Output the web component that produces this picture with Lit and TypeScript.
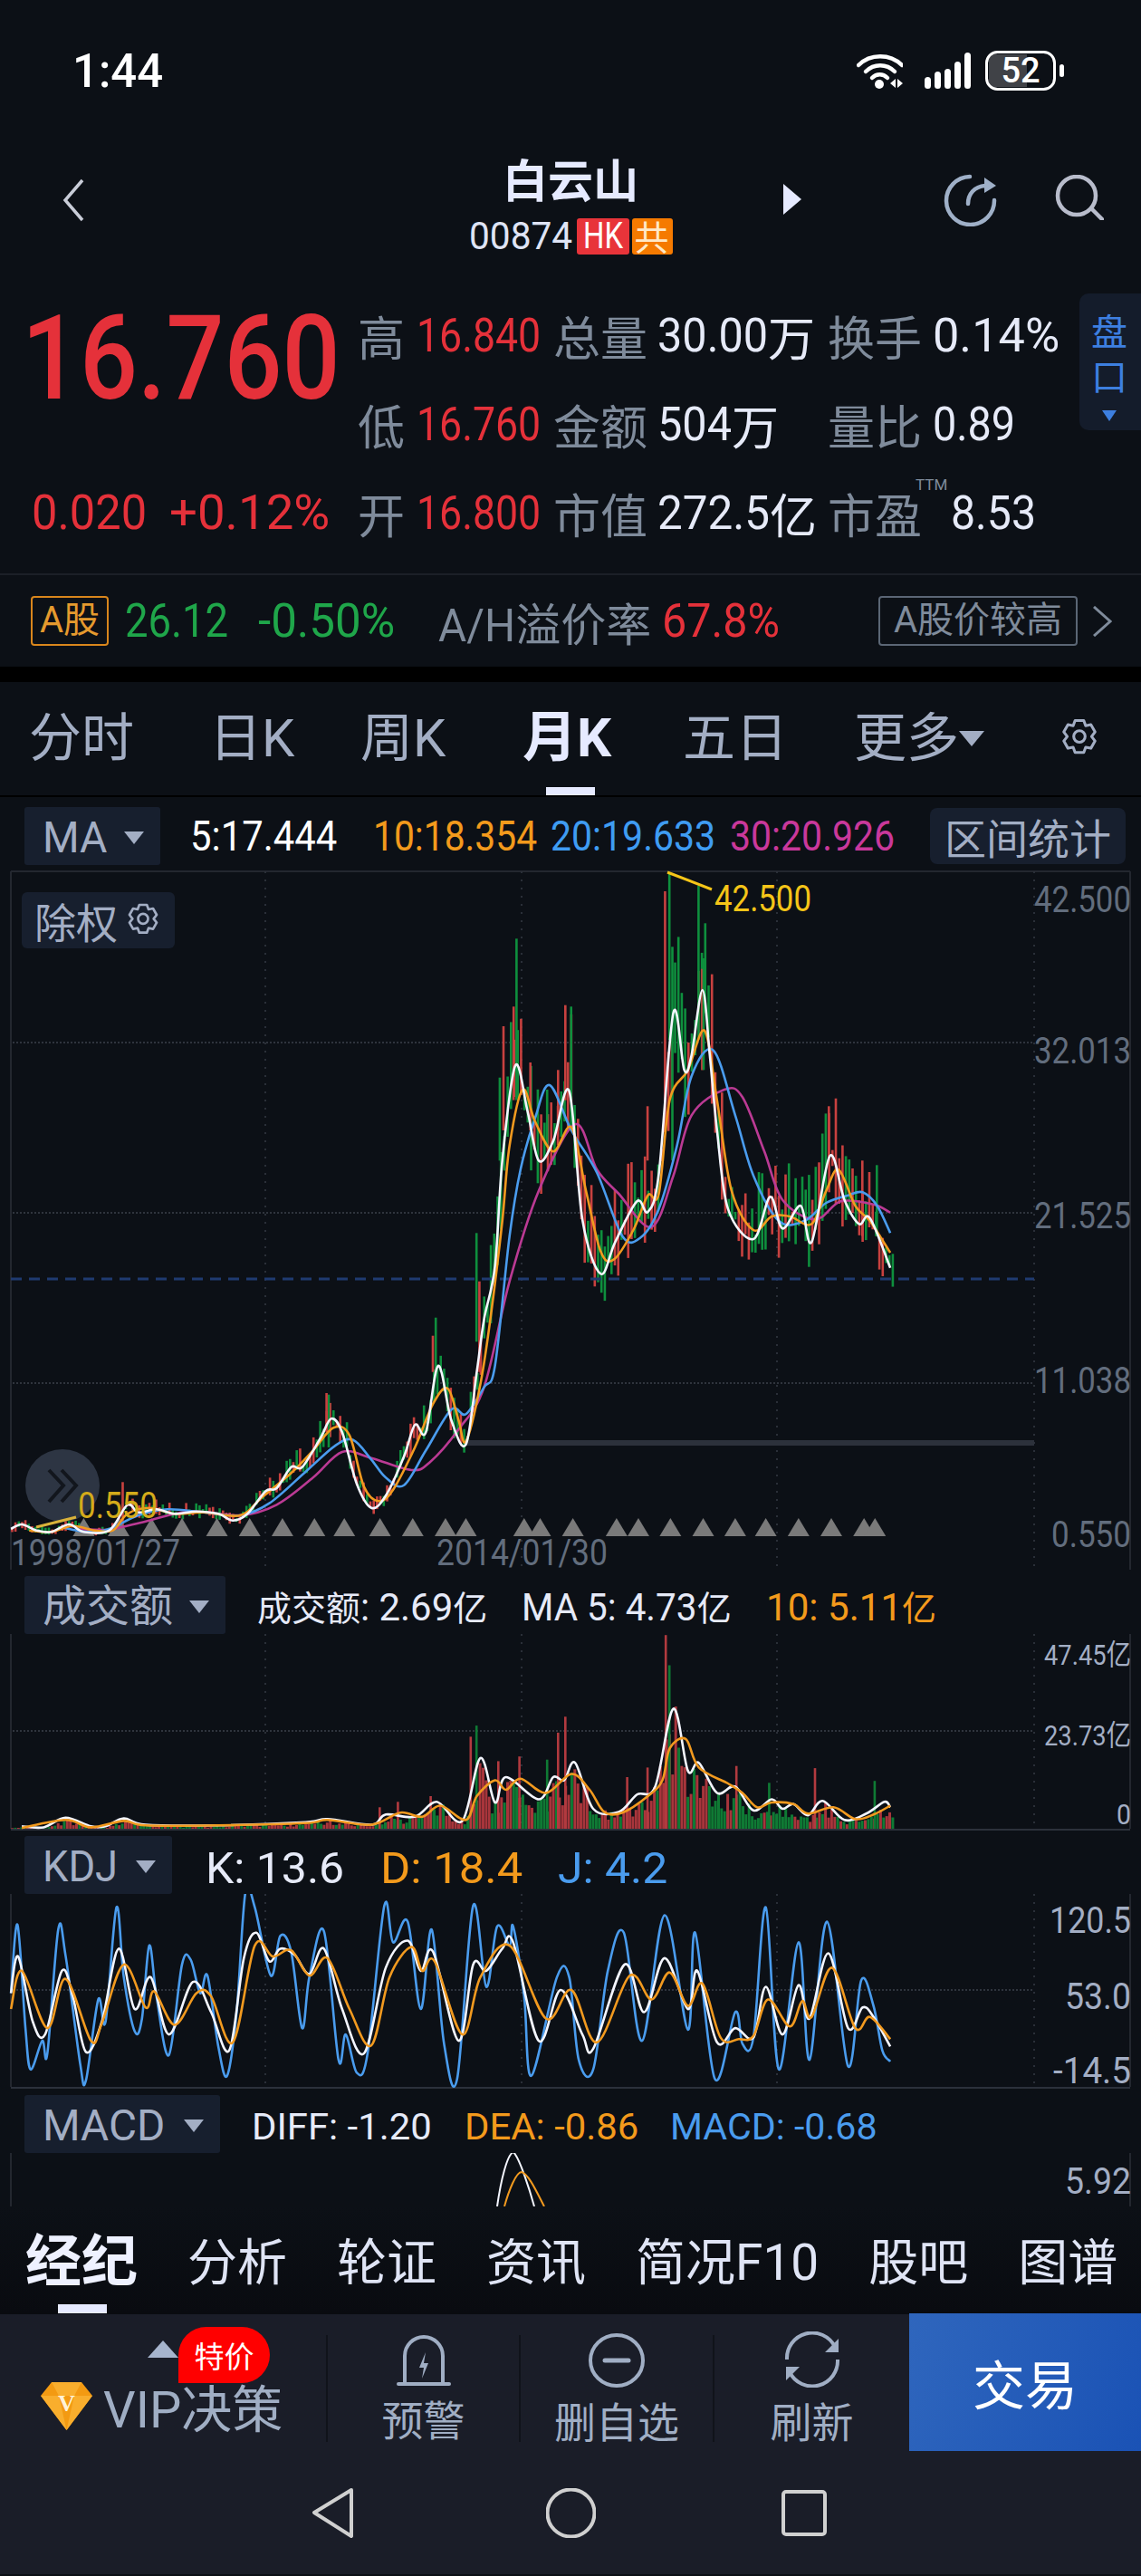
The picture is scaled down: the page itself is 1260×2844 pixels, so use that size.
import { LitElement, html, css, svg } from 'lit';
import { customElement } from 'lit/decorators.js';

type Pt = [number, number];
// [x, top, bottom, colour]
type Spike = [number, number, number, string];

const RED = '#c8413f';
const GREEN = '#0e8f3d';

// traces were read off zoomed crops, so they are kept in crop units and scaled here
const mainPt = (p: Pt[]): Pt[] => p.map(([x, y]) => [x / 1.244, 1250 + y / 3]);
const lowPt = (p: Pt[]): Pt[] => p.map(([x, y]) => [x / 1.244, 1750 + y / 2.851]);

const MA5: Pt[] = [[15,1320],[30,1305],[50,1325],[70,1330],[95,1305],[115,1330],[150,1325],[175,1240],[190,1265],[215,1255],[240,1270],[270,1262],[300,1270],[320,1292],[340,1270],[365,1195],[380,1185],[400,1115],[415,1115],[440,1020],[455,955],[470,1000],[490,1170],[510,1250],[530,1210],[555,1080],[570,975],[585,1000],[602,780],[620,960],[640,1040],[655,800],[665,625],[680,450],[690,100],[708,-215],[725,-60],[740,100],[760,35],[782,-130],[800,295],[825,475],[845,370],[875,235],[890,270],[905,145],[925,-390],[940,-200],[950,-250],[965,-465],[975,-250],[985,0],[1000,260],[1035,360],[1058,220],[1075,325],[1100,250],[1115,370],[1140,85],[1160,230],[1180,310],[1195,290],[1223,455]];
const MA10: Pt[] = [[40,1325],[70,1330],[100,1310],[130,1325],[155,1325],[175,1270],[205,1250],[240,1270],[280,1265],[330,1275],[360,1215],[400,1135],[430,1060],[458,985],[480,1010],[500,1180],[520,1228],[540,1190],[570,1050],[595,905],[615,855],[630,960],[640,1030],[660,840],[675,600],[690,300],[700,50],[718,-135],[735,-30],[760,70],[785,-10],[805,200],[825,400],[843,428],[870,330],[890,215],[905,210],[920,-100],[945,-200],[968,-330],[985,-100],[1005,200],[1035,330],[1060,285],[1085,285],[1115,310],[1135,200],[1152,130],[1175,250],[1195,300],[1223,405]];
const MA20: Pt[] = [[85,1315],[120,1330],[150,1320],[190,1275],[230,1255],[280,1265],[330,1275],[370,1235],[420,1130],[460,1045],[485,1025],[510,1090],[530,1150],[555,1175],[585,1060],[620,925],[640,940],[665,850],[680,780],[700,350],[715,130],[735,-40],[755,-150],[785,0],[820,140],[855,350],[880,355],[905,260],[930,50],[950,-180],[980,-265],[1010,-50],[1035,150],[1070,300],[1105,300],[1135,240],[1165,215],[1185,205],[1205,250],[1223,340]];
const MA30: Pt[] = [[110,1320],[150,1322],[200,1295],[260,1262],[330,1275],[380,1240],[430,1150],[470,1065],[510,1085],[565,1125],[590,1100],[630,990],[665,850],[700,500],[740,200],[790,-20],[820,130],[850,210],[895,320],[925,150],[950,-50],[995,-135],[1020,-110],[1050,70],[1075,230],[1120,295],[1155,235],[1200,245],[1223,272]];

const SPIKES: Spike[] = [
  [685,-175,100,GREEN],[690,-345,0,RED],[704,-410,-100,RED],[708,-635,-100,GREEN],[727,-225,0,RED],[750,-135,50,GREEN],
  [765,-200,0,RED],[775,-415,-100,RED],[783,-410,0,GREEN],[888,-80,100,RED],[912,-792,0,RED],[918,-855,-300,GREEN],
  [922,-608,100,GREEN],[958,-810,-300,GREEN],[963,-535,-200,RED],[965,-570,-200,GREEN],[1137,-80,100,RED],
  [653,340,700,GREEN],[657,500,800,RED],[597,620,800,GREEN],[593,680,800,RED],[813,550,300,GREEN],[630,1150,1000,RED],
  [500,1280,1150,GREEN],[167,1165,1320,RED],[450,875,1050,GREEN],[447,870,1000,RED],[1110,500,300,RED],
  [1198,495,300,RED],[1223,540,400,GREEN],[1203,115,350,GREEN],[1183,100,350,RED],[996,440,200,GREEN],[793,450,100,GREEN],
];

const ARROWS = [115,163,208,250,298,343,388,432,473,522,567,612,640,720,742,787,847,877,921,966,1010,1052,1097,1142,1187,1202];

const VOL_WHITE: Pt[] = [[30,765],[60,768],[90,738],[125,765],[145,765],[170,740],[200,760],[300,762],[420,752],[450,742],[510,760],[530,728],[570,735],[600,688],[635,748],[660,550],[680,690],[695,610],[740,680],[760,610],[775,620],[790,565],[815,710],[850,720],[875,665],[900,640],[925,395],[945,590],[960,565],[985,660],[1010,640],[1035,715],[1060,680],[1075,710],[1090,695],[1110,730],[1130,685],[1160,745],[1190,725],[1215,688],[1223,705]];
const VOL_ORANGE: Pt[] = [[30,770],[90,745],[125,768],[170,748],[200,762],[300,762],[420,755],[450,745],[510,760],[550,722],[580,735],[605,700],[640,745],[655,670],[680,620],[695,650],[715,615],[750,660],[785,600],[810,650],[830,720],[855,722],[890,670],[910,620],[920,520],[942,490],[960,580],[1000,630],[1020,660],[1040,705],[1060,690],[1090,695],[1110,725],[1145,705],[1175,742],[1200,728],[1223,700]];
const VOL_SPIKES: [number, number, string][] = [[913,163,'#b23a3f'],[918,258,'#0f7a34'],[775,420,'#b23a3f'],[765,470,'#b23a3f'],[653,448,'#0f7a34'],[645,483,'#b23a3f'],[545,688,'#b23a3f'],[520,705,'#b23a3f'],[590,670,'#b23a3f'],[1118,582,'#b23a3f'],[1010,575,'#b23a3f'],[1055,628,'#0f7a34'],[1200,622,'#0f7a34'],[888,580,'#b23a3f'],[860,610,'#b23a3f'],[712,545,'#b23a3f'],[683,560,'#b23a3f'],[750,555,'#0f7a34']];

const KDJ_J: Pt[] = [[15,1290],[24,1075],[35,1400],[42,1530],[58,1440],[65,1480],[80,1090],[90,1170],[110,1510],[118,1565],[135,1310],[145,1380],[160,1020],[170,1240],[185,1410],[195,1370],[205,1140],[215,1300],[232,1485],[250,1200],[262,1185],[275,1290],[285,1235],[300,1460],[312,1550],[325,1350],[337,975],[350,1020],[372,1235],[385,1110],[400,1160],[415,1400],[425,1240],[445,1095],[465,1500],[475,1420],[490,1540],[505,1480],[528,1015],[540,1130],[560,1065],[578,1340],[593,1090],[610,1450],[628,1560],[650,1015],[668,1270],[683,1080],[700,1140],[705,1080],[720,1300],[730,1550],[765,1240],[782,1240],[795,1500],[815,1530],[835,1220],[857,1100],[882,1440],[913,1045],[945,1405],[955,1100],[982,1560],[1010,1350],[1020,1450],[1035,1430],[1052,1020],[1070,1530],[1097,1130],[1112,1500],[1136,1065],[1165,1520],[1183,1250],[1200,1330],[1212,1470],[1223,1505]];
const KDJ_K: Pt[] = [[15,1290],[25,1175],[45,1380],[62,1420],[85,1220],[100,1300],[118,1475],[140,1380],[163,1150],[185,1340],[207,1240],[232,1420],[265,1255],[290,1350],[315,1470],[335,1180],[352,1100],[370,1190],[385,1150],[405,1170],[425,1230],[445,1150],[470,1340],[500,1480],[530,1210],[560,1125],[578,1220],[595,1160],[630,1440],[650,1200],[668,1220],[690,1150],[705,1130],[740,1440],[770,1280],[800,1420],[815,1465],[858,1200],[885,1350],[913,1180],[945,1340],[958,1220],[985,1445],[1010,1400],[1035,1430],[1052,1270],[1075,1420],[1097,1265],[1112,1370],[1138,1165],[1165,1400],[1185,1335],[1200,1365],[1223,1458]];
const KDJ_D: Pt[] = [[15,1340],[30,1220],[65,1400],[90,1245],[125,1440],[140,1385],[170,1200],[200,1335],[212,1285],[240,1390],[270,1290],[290,1300],[320,1445],[350,1140],[375,1175],[400,1155],[425,1235],[450,1180],[480,1340],[510,1455],[535,1240],[565,1145],[580,1220],[597,1190],[635,1420],[660,1240],[700,1140],[750,1370],[785,1280],[820,1445],[865,1235],[895,1310],[920,1225],[945,1330],[965,1260],[990,1430],[1015,1435],[1035,1425],[1055,1310],[1085,1395],[1102,1315],[1115,1365],[1143,1210],[1175,1400],[1195,1365],[1223,1435]];

// Roboto advance widths, the app's numerals are a narrower face so they get squeezed to fit
const EM: Record<string, number> = {
  '.': 0.263, ':': 0.242, '-': 0.276, '+': 0.567, '%': 0.732, ' ': 0.247, '/': 0.412,
  K: 0.627, D: 0.654, J: 0.552, M: 0.873, A: 0.652, I: 0.272, F: 0.546, E: 0.568, C: 0.65, H: 0.713,
};

function n(text: string, px: number, target: number) {
  const natural = [...text].reduce((sum, ch) => sum + (EM[ch] ?? 0.5615), 0) * px;
  return html`<span class="n" style="transform:scaleX(${(target / natural).toFixed(3)});margin-right:${(target - natural).toFixed(1)}px">${text}</span>`;
}

const label = (text: string, x: number, y: number, len: number, cls: string) =>
  svg`<text class=${cls} x=${x} y=${y} textLength=${len} lengthAdjust="spacingAndGlyphs">${text}</text>`;

function curve(p: Pt[]): string {
  let d = `M${p[0][0].toFixed(1)} ${p[0][1].toFixed(1)}`;
  for (let i = 0; i < p.length - 1; i++) {
    const a = p[Math.max(i - 1, 0)];
    const b = p[i];
    const c = p[i + 1];
    const e = p[Math.min(i + 2, p.length - 1)];
    const c1x = b[0] + (c[0] - a[0]) / 6;
    const c1y = b[1] + (c[1] - a[1]) / 6;
    const c2x = c[0] - (e[0] - b[0]) / 6;
    const c2y = c[1] - (e[1] - b[1]) / 6;
    d += `C${c1x.toFixed(1)} ${c1y.toFixed(1)} ${c2x.toFixed(1)} ${c2y.toFixed(1)} ${c[0].toFixed(1)} ${c[1].toFixed(1)}`;
  }
  return d;
}

function at(trace: Pt[], x: number): number {
  if (x <= trace[0][0]) return trace[0][1];
  for (let i = 1; i < trace.length; i++) {
    if (x <= trace[i][0]) {
      const t = (x - trace[i - 1][0]) / (trace[i][0] - trace[i - 1][0]);
      return trace[i - 1][1] + t * (trace[i][1] - trace[i - 1][1]);
    }
  }
  return trace[trace.length - 1][1];
}

function seeded(seed: number) {
  let s = seed;
  return () => {
    s = (s * 16807) % 2147483647;
    return s / 2147483647;
  };
}

function candles() {
  const r = seeded(4711);
  const out = [];
  for (let x = 15; x <= 1225; x += 4.6) {
    const w = at(MA5, x);
    const amp = 20 + (1330 - w) * 0.17;
    const top = w - amp * r() * 1.1;
    const bottom = w + amp * r() * 0.7;
    const [p] = mainPt([[x, top]]);
    const [q] = mainPt([[x, bottom]]);
    out.push(svg`<rect x=${p[0].toFixed(1)} y=${p[1].toFixed(1)} width="2.6" height=${(q[1] - p[1]).toFixed(1)} fill=${r() > 0.5 ? RED : GREEN}></rect>`);
  }
  for (const [x, top, bottom, color] of SPIKES) {
    const [p] = mainPt([[x, top]]);
    const [q] = mainPt([[x, bottom]]);
    out.push(svg`<rect x=${p[0].toFixed(1)} y=${p[1].toFixed(1)} width="2.6" height=${(q[1] - p[1]).toFixed(1)} fill=${color}></rect>`);
  }
  return out;
}

function volumeBars() {
  const r = seeded(907);
  const out = [];
  const base = 2021;
  for (let x = 15; x <= 1225; x += 4.2) {
    const w = at(VOL_WHITE, x);
    const h = ((770 - w) * (0.4 + r() * 0.7)) / 2.851;
    const green = r() > (x > 930 ? 0.35 : 0.6);
    out.push(svg`<rect x=${(x / 1.244).toFixed(1)} y=${(base - h).toFixed(1)} width="3" height=${h.toFixed(1)} fill=${green ? '#0f7a34' : '#a8353b'}></rect>`);
  }
  for (const [x, top, color] of VOL_SPIKES) {
    const y = 1750 + top / 2.851;
    out.push(svg`<rect x=${(x / 1.244).toFixed(1)} y=${y.toFixed(1)} width="2.6" height=${(base - y).toFixed(1)} fill=${color}></rect>`);
  }
  return out;
}

const frame = (top: number, bottom: number) => svg`
  <line class="axis" x1="12" x2="12" y1=${top} y2=${bottom}></line>
  <line class="axis" x1="1248" x2="1248" y1=${top} y2=${bottom}></line>
  ${[293, 576, 858, 1142].map((x) => svg`<line class="vgrid" x1=${x} x2=${x} y1=${top} y2=${bottom}></line>`)}
`;

const hgrid = (y: number) => svg`<line class="hgrid" x1="14" x2="1142" y1=${y} y2=${y}></line>`;

const gear = (size: number) => html`<svg class="gear" width=${size} height=${size} viewBox="0 0 24 24">
  <path d="M9.500 1.800h5l1.100 3 3-.6 2.400 4.200-2 2.600 2 2.600-2.400 4.200-3-.6-1.100 3h-5l-1.100-3-3 .6L3 13.600l2-2.600-2-2.600 2.400-4.200 3 .6z"></path>
  <circle cx="12" cy="11" r="3.300"></circle>
</svg>`;

const picker = (text: unknown, width: number) => html`
  <div class="picker" style="width:${width}px"><span>${text}</span><i class="tri"></i></div>
`;

@customElement('app-root')
export class AppRoot extends LitElement {
  static styles = css`
    :host {
      display: block;
      width: 1260px;
      height: 2844px;
      overflow: hidden;
      background: #0c1016;
      color: #e6eaf8;
      font-family: Roboto, 'Noto Sans CJK SC', sans-serif;
    }
    svg {
      display: block;
      flex: none;
    }
    .n {
      display: inline-block;
      transform-origin: 0 50%;
      white-space: pre;
    }
    .status {
      height: 140px;
      box-sizing: border-box;
      padding: 54px 0 0 80px;
      display: flex;
      color: #fff;
    }
    .time {
      font: 500 52px/50px Roboto, sans-serif;
      flex: 1;
    }
    .status-icons {
      display: flex;
      gap: 24px;
      padding: 4px 84px 0 0;
      align-items: flex-start;
    }
    .status-icons svg + svg + svg {
      margin-left: -8px;
    }

    .header {
      height: 160px;
      box-sizing: border-box;
      padding-top: 28px;
      display: grid;
      grid-template-columns: 1fr 225px 1fr;
    }
    .back {
      margin: 29px 0 0 68px;
    }
    .name {
      text-align: center;
    }
    .name h1 {
      margin: 0;
      font: 700 50px/56px 'Noto Sans CJK SC', sans-serif;
      color: #e6eaff;
    }
    .code {
      margin-top: 17px;
      height: 40px;
      display: flex;
      font-size: 42px;
      line-height: 40px;
      color: #dfe4f5;
      white-space: nowrap;
    }
    .code b {
      box-sizing: border-box;
      width: 58px;
      margin-left: 5px;
      font-weight: 400;
      background: #e8343a;
      color: #fff;
      border-radius: 3px;
      padding-left: 7px;
      font-size: 40px;
      text-align: left;
    }
    .code b + b {
      width: 45px;
      margin-left: 3px;
      padding-left: 3px;
      background: #f57a00;
      font: 400 38px/38px 'Noto Sans CJK SC', sans-serif;
      color: #ffe9c8;
    }
    .head-actions {
      display: flex;
      align-items: flex-start;
    }
    .next {
      margin: 35px 0 0 122px;
    }
    .redo {
      margin: 24px 0 0 156px;
    }
    .find {
      margin: 25px 0 0 64px;
    }

    .quote {
      height: 333px;
      box-sizing: border-box;
      display: grid;
      grid-template-columns: 395px 65px 151px 115px 188px 116px 162px 68px;
      grid-template-rows: 98px 98px 98px;
      padding-top: 21px;
    }
    .price-col {
      grid-row: 1 / 4;
      padding-left: 24px;
      display: flex;
      flex-direction: column;
    }
    .price {
      font-size: 130px;
      line-height: 150px;
      font-weight: 500;
      color: #e5313a;
    }
    .change {
      margin-top: 65px;
      padding-left: 11px;
      display: flex;
      gap: 25px;
      font-size: 54px;
      line-height: 60px;
      color: #e5313a;
    }
    .cell {
      display: flex;
      align-items: center;
      white-space: nowrap;
      font-size: 52px;
    }
    .lab {
      color: #7f8b9b;
      font-family: 'Noto Sans CJK SC', sans-serif;
      font-size: 52px;
    }
    .red {
      color: #e5313a;
    }
    .ttm {
      position: relative;
    }
    .ttm small {
      position: absolute;
      left: 100%;
      top: -3px;
      font: 400 17px/18px Roboto, sans-serif;
      color: #7f8b9b;
      margin-left: -7px;
    }
    .side {
      grid-row: 1 / 3;
      grid-column: 8;
      height: 151px;
      margin-top: 3px;
      background: #141c2b;
      border-radius: 10px 0 0 10px;
      display: flex;
      flex-direction: column;
      align-items: center;
      padding: 15px 2px 0 0;
      box-sizing: border-box;
      color: #3d7fe0;
      font: 400 40px/50px 'Noto Sans CJK SC', sans-serif;
    }
    .side i {
      margin-top: 14px;
      border: 8px solid transparent;
      border-top: 12px solid #3d7fe0;
      border-bottom: 0;
    }

    .ah {
      height: 103px;
      box-sizing: border-box;
      border-top: 2px solid #1c2027;
      display: flex;
      align-items: center;
      padding-left: 34px;
      font-size: 52px;
      white-space: nowrap;
    }
    .badge {
      box-sizing: border-box;
      height: 55px;
      border-radius: 4px;
      border: 2px solid #d9861c;
      color: #e59a2e;
      font: 400 40px/50px Roboto, 'Noto Sans CJK SC', sans-serif;
      width: 86px;
      text-align: center;
      white-space: nowrap;
    }
    .green {
      color: #1fa64a;
    }
    .ah .up {
      margin-left: 18px;
    }
    .ah .pct {
      margin-left: 33px;
    }
    .ah .prem {
      margin-left: 48px;
      color: #7f8b9b;
      font-size: 50px;
    }
    .ah .rate {
      margin-left: 12px;
    }
    .ah .note {
      margin-left: auto;
      width: 220px;
      border-color: #5b6675;
      color: #7f8b9b;
    }
    .ah svg {
      margin: 0 32px 0 16px;
    }
    .gap {
      height: 17px;
      background: #000;
    }

    .periods {
      height: 127px;
      box-sizing: border-box;
      border-bottom: 2px solid #000;
      padding: 0 0 2px 32px;
      display: grid;
      grid-template-columns: 199px 167px 179px 177px 189px 226px auto;
      align-items: center;
      font-size: 58px;
      line-height: 1;
      color: #a3aec4;
    }
    .periods span {
      display: flex;
      align-items: center;
      white-space: nowrap;
    }
    .periods .on {
      position: relative;
      align-self: stretch;
      font-weight: 700;
      color: #e6eaff;
      font-size: 60px;
    }
    .on::after {
      content: '';
      position: absolute;
      left: 26px;
      bottom: -2px;
      width: 54px;
      height: 9px;
      background: #e6eaff;
    }
    .periods .more i {
      border: 14px solid transparent;
      border-top: 17px solid #a3aec4;
      border-bottom: 0;
      margin-top: 2px;
    }
    .gear {
      fill: none;
      stroke: #a3aec4;
      stroke-width: 1.600;
      stroke-linejoin: round;
    }

    .legend {
      display: flex;
      align-items: center;
      white-space: nowrap;
      padding-left: 27px;
      box-sizing: border-box;
    }
    .ma-row {
      height: 81px;
      padding-top: 5px;
      font-size: 46px;
    }
    .picker {
      height: 64px;
      box-sizing: border-box;
      background: #171f2e;
      border-radius: 3px;
      padding: 4px 0 0 20px;
      display: flex;
      align-items: center;
      flex: none;
      color: #a3aec4;
      font-size: 48px;
      line-height: 1;
    }
    .tri {
      margin-left: auto;
      margin-right: 18px;
      border: 11px solid transparent;
      border-top: 14px solid #a3aec4;
      border-bottom: 0;
    }
    .ma-row .v5 {
      margin-left: 33px;
      color: #fff;
    }
    .ma-row .v10 {
      margin-left: 40px;
      color: #f39a1c;
    }
    .ma-row .v20 {
      margin-left: 15px;
      color: #3f9cf2;
    }
    .ma-row .v30 {
      margin-left: 15px;
      color: #c9389b;
    }
    .range {
      margin-left: auto;
      margin-right: 17px;
      height: 62px;
      width: 216px;
      background: #171f2e;
      border-radius: 8px;
      color: #a3aec4;
      text-align: center;
      font: 400 46px/62px 'Noto Sans CJK SC', sans-serif;
    }

    .pane-wrap {
      position: relative;
    }
    .axis {
      stroke: #23272f;
      stroke-width: 2;
    }
    .vgrid {
      stroke: #2a2f38;
      stroke-width: 2;
      stroke-dasharray: 2 7;
    }
    .hgrid {
      stroke: #2f343d;
      stroke-width: 2;
      stroke-dasharray: 2 2;
    }
    .ln {
      fill: none;
      stroke-width: 2.600;
      stroke-linejoin: round;
    }
    .white {
      stroke: #f4f6ff;
    }
    .orange {
      stroke: #f29a1f;
    }
    .blue {
      stroke: #4a9cee;
    }
    .pink {
      stroke: #bb3a94;
    }
    text {
      font-family: Roboto, 'Noto Sans CJK SC', sans-serif;
    }
    .scale {
      fill: #626d7d;
      font-size: 40px;
      text-anchor: end;
    }
    .scale.light {
      fill: #a3aec4;
    }
    .scale.small {
      font-size: 32px;
    }
    .date {
      fill: #626d7d;
      font-size: 40px;
    }
    .peak {
      fill: #f5c518;
      font-size: 40px;
    }
    .peak.dim {
      fill: #d4ab1a;
    }
    .adjust {
      position: absolute;
      left: 24px;
      top: 24px;
      width: 169px;
      height: 62px;
      background: #171f2e;
      border-radius: 6px;
      display: flex;
      align-items: center;
      gap: 8px;
      padding-left: 14px;
      box-sizing: border-box;
      color: #a3aec4;
      font: 400 46px/1 'Noto Sans CJK SC', sans-serif;
    }
    .vol-row,
    .macd-row,
    .kdj-row {
      align-items: flex-end;
    }
    .vol-row > span,
    .macd-row > span,
    .kdj-row > span {
      line-height: 56px;
    }
    .vol-row {
      height: 71px;
      font-size: 42px;
      color: #e6eaf8;
    }
    .cjk {
      font-size: 38px;
    }
    .vol-row > :nth-child(2) {
      margin-left: 35px;
    }
    .vol-row > :nth-child(3) {
      margin-left: 38px;
    }
    .vol-row > :nth-child(4) {
      margin-left: 38px;
      color: #f39a1c;
    }
    .kdj-row {
      height: 70px;
      font-size: 48px;
    }
    .kdj-row > :nth-child(2) {
      margin-left: 37px;
    }
    .kdj-row > :nth-child(3) {
      margin-left: 40px;
      color: #f39a1c;
    }
    .kdj-row > :nth-child(4) {
      margin-left: 38px;
      color: #4a9cee;
    }
    .macd-row {
      height: 71px;
      font-size: 40px;
    }
    .macd-row > :nth-child(2) {
      margin-left: 35px;
    }
    .macd-row > :nth-child(3) {
      margin-left: 36px;
      color: #f39a1c;
    }
    .macd-row > :nth-child(4) {
      margin-left: 35px;
      color: #4a9cee;
    }

    .sections {
      height: 119px;
      box-sizing: border-box;
      padding: 5px 0 0 28px;
      display: flex;
      gap: 55px;
      align-items: center;
      font-size: 55px;
      line-height: 1;
      color: #dfe4f5;
      white-space: nowrap;
      background: linear-gradient(#0c1016, #090b10);
    }
    .sections .on {
      position: relative;
      align-self: stretch;
      display: flex;
      align-items: center;
      font-weight: 700;
      font-size: 62px;
      color: #eef1ff;
    }
    .sections .on::after {
      left: 36px;
      bottom: 1px;
      height: 10px;
    }

    .dock {
      height: 287px;
      background: #1a1d28;
    }
    .tools {
      height: 151px;
      display: grid;
      grid-template-columns: 362px 213px 214px 215px 256px;
    }
    .tool {
      margin: 23px 0 10px;
      height: 118px;
      border-right: 2px solid #10131a;
      display: flex;
      flex-direction: column;
      align-items: center;
      color: #a0aec4;
      font: 400 46px/46px 'Noto Sans CJK SC', sans-serif;
      white-space: nowrap;
    }
    .tool span {
      margin-top: 10px;
    }
    .tool svg {
      fill: none;
      stroke: #a0aec4;
      stroke-width: 4;
    }
    .vip {
      position: relative;
      flex-direction: row;
      align-items: flex-start;
      padding: 55px 0 0 45px;
      box-sizing: border-box;
      gap: 12px;
      font: 400 56px/56px Roboto, 'Noto Sans CJK SC', sans-serif;
    }
    .vip span {
      margin-top: 0;
    }
    .vip .tip {
      position: absolute;
      left: 197px;
      top: -9px;
      width: 101px;
      height: 62px;
      box-sizing: border-box;
      background: #f00;
      border-radius: 31px 31px 31px 0;
      color: #fff;
      font: 400 33px/62px 'Noto Sans CJK SC', sans-serif;
      text-align: center;
    }
    .vip i {
      position: absolute;
      left: 163px;
      top: 6px;
      border: 17px solid transparent;
      border-bottom: 19px solid #a6b4cd;
      border-top: 0;
    }
    .trade {
      height: 152px;
      margin-top: -1px;
      background: linear-gradient(110deg, #2f66bd, #1a52b5);
      color: #fff;
      font: 400 58px/152px 'Noto Sans CJK SC', sans-serif;
      text-align: center;
    }
    .nav {
      padding: 41px 0 0 344px;
      display: flex;
      gap: 212px;
      align-items: flex-start;
    }
    .nav svg {
      fill: none;
      stroke: #d0d0d0;
      stroke-width: 4;
      stroke-linejoin: round;
    }
    .nav svg:last-child {
      margin: 2px 0 0 -7px;
    }
  `;

  private renderStatus() {
    return html`<div class="status">
      <div class="time">${n('1:44', 52, 98)}</div>
      <div class="status-icons">
        <svg width="51" height="40" viewBox="0 0 51 40" fill="none" stroke="#fff" stroke-width="4.500" stroke-linecap="round">
          <path d="M2 14C15 1 37 1 50 14"></path>
          <path d="M10 21C19 12 33 12 42 21"></path>
          <path d="M17 28C22 23 29 23 34 28"></path>
          <circle cx="25" cy="35" r="5" fill="#fff" stroke="none"></circle>
          <path d="M43 29v10l-6-5zM45 29v10l6-5z" fill="#fff" stroke="none"></path>
        </svg>
        <svg width="51" height="40" viewBox="0 0 51 40" fill="#fff">
          <rect x="0" y="27" width="7" height="13" rx="3.500"></rect>
          <rect x="11" y="21" width="7" height="19" rx="3.500"></rect>
          <rect x="22" y="18" width="7" height="22" rx="3.500"></rect>
          <rect x="33" y="10" width="7" height="30" rx="3.500"></rect>
          <rect x="44" y="0" width="7" height="40" rx="3.500"></rect>
        </svg>
        <svg width="88" height="44" viewBox="0 0 88 44" style="margin-top:-2px">
          <rect x="4" y="4" width="42" height="36" fill="#404247"></rect>
          <rect x="1.500" y="1.500" width="75" height="41" rx="12" fill="none" stroke="#fff" stroke-width="3"></rect>
          <rect x="82" y="15" width="5" height="14" rx="2.500" fill="#fff"></rect>
          <text x="39" y="35" text-anchor="middle" fill="#fff" style="font:500 38px Roboto,sans-serif">52</text>
        </svg>
      </div>
    </div>`;
  }

  private renderHeader() {
    return html`<div class="header">
      <svg class="back" width="26" height="48" viewBox="0 0 26 48" fill="none" stroke="#c9cdd8" stroke-width="3.500">
        <path d="M23 2L4 24l19 22"></path>
      </svg>
      <div class="name">
        <h1>白云山</h1>
        <div class="code">${n('00874', 42, 114)}<b>${n('HK', 40, 44)}</b><b>共</b></div>
      </div>
      <div class="head-actions">
        <svg class="next" width="20" height="34" viewBox="0 0 20 34" fill="#e6eaff"><path d="M0 0l20 17L0 34z"></path></svg>
        <svg class="redo" width="60" height="58" viewBox="0 0 60 58" fill="none" stroke="#9fb0c8" stroke-width="4.500" stroke-linecap="round">
          <path d="M30 3A26.500 26.500 0 1 0 57 29"></path>
          <path d="M28 33C28 22 35 14 47 13"></path>
          <path d="M46 4l13 9-13 8z" fill="#9fb0c8" stroke="none"></path>
        </svg>
        <svg class="find" width="54" height="50" viewBox="0 0 54 50" fill="none" stroke="#b8bccb" stroke-width="4.500" stroke-linecap="round">
          <circle cx="24" cy="23" r="21"></circle>
          <path d="M41 38L52 49"></path>
        </svg>
      </div>
    </div>`;
  }

  private renderQuote() {
    return html`<div class="quote">
      <div class="price-col">
        <div class="price">${n('16.760', 130, 346)}</div>
        <div class="change"><span>${n('0.020', 54, 127)}</span><span>${n('+0.12%', 54, 177)}</span></div>
      </div>
      <div class="cell lab">高</div><div class="cell red">${n('16.840', 52, 137)}</div>
      <div class="cell lab">总量</div><div class="cell">${n('30.00', 52, 122)}万</div>
      <div class="cell lab">换手</div><div class="cell">${n('0.14%', 52, 140)}</div>
      <div class="side">盘<br />口<i></i></div>
      <div class="cell lab">低</div><div class="cell red">${n('16.760', 52, 137)}</div>
      <div class="cell lab">金额</div><div class="cell">${n('504', 52, 82)}万</div>
      <div class="cell lab">量比</div><div class="cell">${n('0.89', 52, 91)}</div>
      <div class="cell lab">开</div><div class="cell red">${n('16.800', 52, 137)}</div>
      <div class="cell lab">市值</div><div class="cell">${n('272.5', 52, 124)}亿</div>
      <div class="cell lab"><span class="ttm">市盈<small>TTM</small></span></div><div class="cell" style="padding-left:20px">${n('8.53', 52, 94)}</div>
    </div>
    <div class="ah">
      <div class="badge">A股</div>
      <span class="green up">${n('26.12', 52, 114)}</span>
      <span class="green pct">${n('-0.50%', 52, 151)}</span>
      <span class="prem">${n('A/H', 50, 85)}溢价率</span>
      <span class="red rate">${n('67.8%', 52, 130)}</span>
      <div class="badge note">A股价较高</div>
      <svg width="22" height="34" viewBox="0 0 22 34" fill="none" stroke="#7f8b9b" stroke-width="3"><path d="M2 1l18 16L2 33"></path></svg>
    </div>
    <div class="gap"></div>`;
  }

  private renderPeriods() {
    return html`<div class="periods">
      <span>分时</span><span>日K</span><span>周K</span>
      <span class="on">月K</span>
      <span>五日</span>
      <span class="more">更多<i></i></span>
      ${gear(46)}
    </div>
    <div class="legend ma-row">
      ${picker(n('MA', 48, 71), 150)}
      <span class="v5">${n('5:17.444', 46, 162)}</span>
      <span class="v10">${n('10:18.354', 46, 181)}</span>
      <span class="v20">${n('20:19.633', 46, 182)}</span>
      <span class="v30">${n('30:20.926', 46, 182)}</span>
      <div class="range">区间统计</div>
    </div>`;
  }

  private renderMain() {
    const line = (p: Pt[], cls: string) => svg`<path class="ln ${cls}" d=${curve(mainPt(p))}></path>`;
    return html`<div class="pane-wrap">
      <svg width="1260" height="772" viewBox="0 963 1260 772">
        <line class="axis" x1="12" x2="1248" y1="964" y2="964"></line>
        ${frame(964, 1735)}
        ${hgrid(1153)} ${hgrid(1341)} ${hgrid(1529)}
        ${candles()}
        <line x1="12" x2="1142" y1="1414" y2="1414" stroke="#1f3a70" stroke-width="3" stroke-dasharray="12 8"></line>
        <rect x="514" y="1592" width="628" height="6" fill="#2c313b"></rect>
        ${ARROWS.map((x) => {
          const cx = x / 1.244;
          return svg`<path d="M${cx - 12} 1698L${cx} 1678L${cx + 12} 1698z" fill="#7a7a7a"></path>`;
        })}
        ${line(MA30, 'pink')} ${line(MA20, 'blue')} ${line(MA10, 'orange')} ${line(MA5, 'white')}
        <ellipse cx="69" cy="1642" rx="41" ry="40" fill="#2d3543"></ellipse>
        <path d="M54 1625l16 17-16 18M68 1625l16 17-16 18" fill="none" stroke="#12161d" stroke-width="4"></path>
        <path d="M40 1688L84 1677" stroke="#d9b23a" stroke-width="3"></path>
        ${label('0.550', 86, 1678, 88, 'peak dim')}
        <path d="M737 965L786 984" stroke="#f5c518" stroke-width="3"></path>
        ${label('42.500', 789, 1008, 107, 'peak')}
        ${label('42.500', 1249, 1009, 107, 'scale')}
        ${label('32.013', 1249, 1176, 107, 'scale')}
        ${label('21.525', 1249, 1358, 107, 'scale')}
        ${label('11.038', 1249, 1540, 107, 'scale')}
        ${label('0.550', 1249, 1710, 88, 'scale')}
        ${label('1998/01/27', 12, 1730, 187, 'date')}
        ${label('2014/01/30', 482, 1730, 189, 'date')}
      </svg>
      <div class="adjust">除权${gear(40)}</div>
    </div>`;
  }

  private renderLower() {
    const low = (p: Pt[], cls: string) => svg`<path class="ln ${cls}" d=${curve(lowPt(p))}></path>`;
    return html`<div class="legend vol-row">
      ${picker('成交额', 222)}
      <span><span class="cjk">成交额</span>${n(': 2.69', 42, 102)}<span class="cjk">亿</span></span>
      <span>${n('MA 5: 4.73', 42, 193)}<span class="cjk">亿</span></span>
      <span>${n('10: 5.11', 42, 150)}<span class="cjk">亿</span></span>
    </div>
    <svg width="1260" height="217" viewBox="0 1806 1260 217">
      ${frame(1806, 2021)}
      ${hgrid(1913)}
      ${volumeBars()}
      <line x1="12" x2="1248" y1="2022" y2="2022" stroke="#2c313b" stroke-width="2"></line>
      ${low(VOL_WHITE, 'white')} ${low(VOL_ORANGE, 'orange')}
      ${label('47.45亿', 1249, 1840, 96, 'scale light small')}
      ${label('23.73亿', 1249, 1929, 96, 'scale light small')}
      ${label('0', 1249, 2016, 16, 'scale light small')}
    </svg>
    <div class="legend kdj-row">
      ${picker(n('KDJ', 48, 83), 163)}
      <span>${n('K: 13.6', 48, 153)}</span><span>${n('D: 18.4', 48, 157)}</span><span>${n('J: 4.2', 48, 121)}</span>
    </div>
    <svg width="1260" height="215" viewBox="0 2093 1260 215">
      ${frame(2093, 2306)}
      ${hgrid(2199)}
      <line x1="12" x2="1248" y1="2307" y2="2307" stroke="#2c313b" stroke-width="2"></line>
      ${low(KDJ_J, 'blue')} ${low(KDJ_K, 'white')} ${low(KDJ_D, 'orange')}
      ${label('120.5', 1249, 2136, 90, 'scale light')}
      ${label('53.0', 1249, 2220, 73, 'scale light')}
      ${label('-14.5', 1249, 2302, 86, 'scale light')}
    </svg>
    <div class="legend macd-row">
      ${picker(n('MACD', 48, 135), 216)}
      <span>${n('DIFF: -1.20', 40, 198)}</span><span>${n('DEA: -0.86', 40, 192)}</span><span>${n('MACD: -0.68', 40, 228)}</span>
    </div>
    <svg width="1260" height="59" viewBox="0 2379 1260 59">
      <line class="axis" x1="12" x2="12" y1="2379" y2="2438"></line>
      <line class="axis" x1="1248" x2="1248" y1="2379" y2="2438"></line>
      <path class="ln white" style="stroke-width:2" d="M549 2438C553 2410 560 2380 567 2378C574 2385 585 2420 590 2438"></path>
      <path class="ln orange" style="stroke-width:2" d="M557 2438C562 2420 570 2400 576 2400C584 2402 594 2425 601 2438"></path>
      ${label('5.92', 1249, 2424, 73, 'scale light')}
    </svg>`;
  }

  private renderDock() {
    return html`<div class="sections">
      <span class="on">经纪</span>
      <span>分析</span><span>轮证</span><span>资讯</span><span>简况F10</span><span>股吧</span><span>图谱</span>
    </div>
    <div class="dock">
      <div class="tools">
        <div class="tool vip">
          <i></i>
          <div class="tip">特价</div>
          <svg width="57" height="53" viewBox="0 0 57 53" style="stroke:none;margin-top:-3px">
            <path d="M12 0h33l12 15-28.500 38L0 15z" fill="#f39a12"></path>
            <path d="M12 0h33l-8 15H20zM0 15h20l8.500 38zM57 15H37l-8.500 38z" fill="#f9ae2d"></path>
            <text x="28.500" y="32" text-anchor="middle" fill="#fff2d6" style="font:700 26px 'Liberation Serif',serif">V</text>
          </svg>
          <span>VIP决策</span>
        </div>
        <div class="tool">
          <svg width="60" height="58" viewBox="0 0 60 58">
            <path d="M9 52V23a21 21 0 0 1 42 0v29"></path>
            <path d="M2 54h56" stroke-linecap="round"></path>
            <path d="M32 19l-7 17h5l-2 12 7-17h-5z" fill="#a0aec4" stroke="none"></path>
          </svg>
          <span>预警</span>
        </div>
        <div class="tool">
          <svg width="62" height="60" viewBox="0 0 62 60" style="margin-top:-2px">
            <ellipse cx="31" cy="30" rx="29" ry="28"></ellipse>
            <path d="M18 30h26" stroke-width="5" stroke-linecap="round"></path>
          </svg>
          <span style="margin-top:12px">删自选</span>
        </div>
        <div class="tool" style="border:0">
          <svg width="62" height="62" viewBox="0 0 62 62" style="margin-top:-4px">
            <path d="M3 31A28 28 0 0 1 56 17"></path>
            <path d="M59 31A28 28 0 0 1 6 45"></path>
            <path d="M60 8v15H45zM2 54V39h15z" fill="#a0aec4" stroke="none"></path>
          </svg>
          <span style="margin-top:12px">刷新</span>
        </div>
        <div class="trade">交易</div>
      </div>
      <div class="nav">
        <svg width="47" height="55" viewBox="0 0 47 55"><path d="M44 2L3 27l41 26z"></path></svg>
        <svg width="55" height="55" viewBox="0 0 55 55"><ellipse cx="27.500" cy="27.500" rx="26" ry="26"></ellipse></svg>
        <svg width="50" height="51" viewBox="0 0 50 51"><rect x="2" y="2" width="46" height="47" rx="3"></rect></svg>
      </div>
    </div>`;
  }

  render() {
    return html`
      ${this.renderStatus()} ${this.renderHeader()} ${this.renderQuote()} ${this.renderPeriods()}
      ${this.renderMain()} ${this.renderLower()} ${this.renderDock()}
    `;
  }
}
